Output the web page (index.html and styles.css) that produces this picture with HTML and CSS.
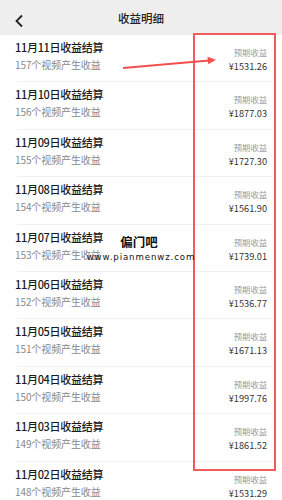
FILE: index.html
```html
<!DOCTYPE html>
<html>
<head>
<meta charset="utf-8">
<link rel="stylesheet" href="styles.css">
</head>
<body>
<div class="page">
  <header class="bar">
    <svg class="back" width="10" height="14" viewBox="0 0 10 14"><path d="M8 1.5 L2.5 7 L8 12.5" fill="none" stroke="#222" stroke-width="1.8"/></svg>
    <div class="title">收益明细</div>
  </header>
  <ul class="list">
    <li class="row"><div class="l"><div class="t">11月11日收益结算</div><div class="s">157个视频产生收益</div></div><div class="r"><div class="k">预期收益</div><div class="v">¥1531.26</div></div></li>
    <li class="row"><div class="l"><div class="t">11月10日收益结算</div><div class="s">156个视频产生收益</div></div><div class="r"><div class="k">预期收益</div><div class="v">¥1877.03</div></div></li>
    <li class="row"><div class="l"><div class="t">11月09日收益结算</div><div class="s">155个视频产生收益</div></div><div class="r"><div class="k">预期收益</div><div class="v">¥1727.30</div></div></li>
    <li class="row"><div class="l"><div class="t">11月08日收益结算</div><div class="s">154个视频产生收益</div></div><div class="r"><div class="k">预期收益</div><div class="v">¥1561.90</div></div></li>
    <li class="row"><div class="l"><div class="t">11月07日收益结算</div><div class="s">153个视频产生收益</div></div><div class="r"><div class="k">预期收益</div><div class="v">¥1739.01</div></div></li>
    <li class="row"><div class="l"><div class="t">11月06日收益结算</div><div class="s">152个视频产生收益</div></div><div class="r"><div class="k">预期收益</div><div class="v">¥1536.77</div></div></li>
    <li class="row"><div class="l"><div class="t">11月05日收益结算</div><div class="s">151个视频产生收益</div></div><div class="r"><div class="k">预期收益</div><div class="v">¥1671.13</div></div></li>
    <li class="row"><div class="l"><div class="t">11月04日收益结算</div><div class="s">150个视频产生收益</div></div><div class="r"><div class="k">预期收益</div><div class="v">¥1997.76</div></div></li>
    <li class="row"><div class="l"><div class="t">11月03日收益结算</div><div class="s">149个视频产生收益</div></div><div class="r"><div class="k">预期收益</div><div class="v">¥1861.52</div></div></li>
    <li class="row"><div class="l"><div class="t">11月02日收益结算</div><div class="s">148个视频产生收益</div></div><div class="r"><div class="k">预期收益</div><div class="v">¥1531.29</div></div></li>
  </ul>
  <div class="box"></div>
  <svg class="arrow" width="282" height="500" viewBox="0 0 282 500">
    <line x1="123" y1="68" x2="209" y2="60.5" stroke="#f24f4f" stroke-width="1.8"/>
    <path d="M216 59.8 L207.5 56.8 L208.3 64.2 Z" fill="#f24f4f"/>
  </svg>
  <div class="wm">
    <div class="wm1">偏门吧</div>
    <div class="wm2">www.pianmenwz.com</div>
  </div>
</div>
</body>
</html>
```
FILE: styles.css
```css
* { box-sizing: border-box; margin: 0; padding: 0; }
html, body { width: 282px; height: 500px; overflow: hidden; background: #fff; }
body { font-family: "Noto Sans CJK SC", "Noto Sans", sans-serif; color: #222; }
.page { position: relative; width: 282px; height: 500px; }
.bar {
  height: 35px;
  background: #eeeeee;
  display: flex;
  align-items: center;
  justify-content: center;
  position: relative;
}
.back { position: absolute; left: 14px; top: 14px; }
.title { font-size: 11.5px; font-weight: 500; color: #222; line-height: 14px; margin-top: 1px; }
.list { list-style: none; padding: 0 10px 0 15px; }
.row {
  height: 47.4px;
  display: flex;
  justify-content: space-between;
  border-bottom: 1px solid #f0f0f0;
  margin-left: 2px;
}
.row .l { margin-left: -2px; padding-top: 4px; }
.t { font-size: 11px; line-height: 16px; color: #1a1a1a; letter-spacing: -0.3px; font-weight: 500; }
.s { font-size: 10px; line-height: 15px; color: #888; margin-top: 2px; letter-spacing: -0.1px; }
.r { text-align: right; padding-top: 12px; padding-right: 5px; }
.k { font-size: 8.3px; line-height: 11px; color: #999; }
.v { font-size: 9.2px; line-height: 12px; color: #333; margin-top: 2px; }
.box {
  position: absolute;
  left: 193px; top: 33px;
  width: 83px; height: 438px;
  border: 2px solid #f35a5a;
}
.arrow { position: absolute; left: 0; top: 0; }
.wm { position: absolute; left: 84px; top: 234px; width: 114px; text-align: center; }
.wm1 { font-size: 12.5px; font-weight: 700; line-height: 16px; color: #111; margin-left: -4px; }
.wm2 { font-family: "DejaVu Sans", sans-serif; font-size: 8.6px; line-height: 12px; color: #111; letter-spacing: 0.9px; margin-top: 1px; }
```
